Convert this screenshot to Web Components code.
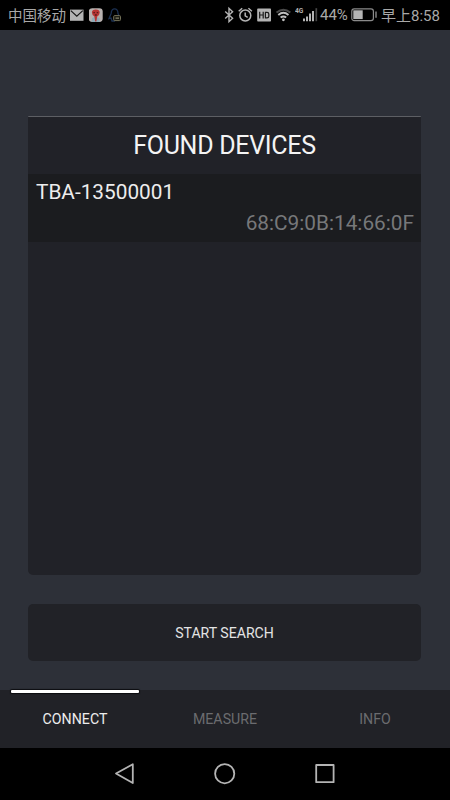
<!DOCTYPE html>
<html lang="en">
<head>
<meta charset="utf-8">
<meta name="viewport" content="width=device-width, initial-scale=1">
<title>Devices</title>
<style>
  body {
    margin: 0;
    background: #000;
    font-family: Roboto, "Noto Sans CJK SC", sans-serif;
  }
</style>
</head>
<body>
<device-app></device-app>

<script>
const define = (name, html) => {
  const template = document.createElement('template');
  template.innerHTML = html;

  customElements.define(name, class extends HTMLElement {
    constructor() {
      super();
      this.attachShadow({ mode: 'open' });
      this.shadowRoot.appendChild(template.content.cloneNode(true));
    }
  });
};

define('status-bar', `
  <style>
    :host {
      display: flex;
      justify-content: space-between;
      box-sizing: border-box;
      height: 30px;
      padding: 0 10px 0 8px;
      background: #000;
      color: #a9a9a9;
      font-size: 14.5px;
      line-height: 30px;
      white-space: nowrap;
    }

    .group {
      display: flex;
      align-items: center;
    }

    svg {
      display: block;
      flex: none;
    }

    .carrier { width: 62px; padding-top: 3px; }
    .percent { width: 31px; font-size: 15px; line-height: 28px; }
    .time { width: 59px; padding-top: 2px; font-size: 15px; }
  </style>
  <div class="group">
    <span class="carrier">中国移动</span>
    <!-- mail -->
    <svg width="19" height="30" viewBox="0 0 19 30">
      <rect x="0" y="9.6" width="13.5" height="11.2" fill="#b4b4b4"/>
      <path d="M.8 10.6 6.8 16.2 12.8 10.6" fill="none" stroke="#161616" stroke-width="1.2"/>
    </svg>
    <!-- music app -->
    <svg width="19" height="30" viewBox="0 0 19 30">
      <rect x="-.3" y="8.2" width="14" height="13.8" rx="3.4" fill="#b9b2b0"/>
      <path d="M3 18.2 6.6 16.6 10.4 18.2 10.8 22H2.6Z" fill="#8eabb8"/>
      <path d="M2.9 12.6Q2.9 9.4 6.8 9.4T10.7 12.6Q10.7 15.2 8.2 16.4L7.4 21.4H6.2L5.4 16.4Q2.9 15.2 2.9 12.6Z" fill="#b83533"/>
      <path d="M4.4 12.7h1.5M7.7 12.7h1.5M5.8 15h2" stroke="#5a1a1b" stroke-width="1.3"/>
    </svg>
    <!-- messenger -->
    <svg width="15" height="30" viewBox="0 0 15 30">
      <path d="M3.2 13.6C3.2 7.2 10 7.2 10 13.6L10.8 15M3.2 13.6 1 18.5 3 18 4 21H7" fill="none" stroke="#1b3052" stroke-width="1.3"/>
      <rect x="5.7" y="15.6" width="6.8" height="5" rx="1" fill="#17170f" stroke="#74725a" stroke-width="1"/>
      <path d="M7.5 18.1h3.5" stroke="#a3a184" stroke-width="1"/>
    </svg>
  </div>
  <div class="group">
    <!-- bluetooth -->
    <svg width="14" height="30" viewBox="0 0 14 30">
      <path d="M1.2 11.6 8.6 18.3 5 21.7V8.3L8.6 11.7 1.2 18.4" fill="none" stroke="#b4b4b4" stroke-width="1.4"/>
    </svg>
    <!-- alarm -->
    <svg width="19" height="30" viewBox="0 0 19 30">
      <g fill="none" stroke="#b4b4b4" stroke-width="1.5">
        <circle cx="7.3" cy="15.5" r="5.5"/>
        <path d="M7.2 12.4v3.5l2.5 1.5M.7 11.2 4.2 8.2M10.4 8.2l3.5 3"/>
      </g>
    </svg>
    <!-- HD voice -->
    <svg width="19" height="30" viewBox="0 0 19 30">
      <rect x=".2" y="8.6" width="13.8" height="13" rx=".8" fill="#b4b4b4"/>
      <path d="M2.7 11.8v6.6M6.2 11.8v6.6M2.7 15h3.5M8.4 12.4v5.4M7.9 12.4H10q1.8 0 1.8 1.6v2.2q0 1.6-1.8 1.6H7.9" fill="none" stroke="#1a1a1a" stroke-width="1.2"/>
    </svg>
    <!-- wifi -->
    <svg width="19" height="30" viewBox="0 0 19 30">
      <path d="M.5 12.6Q7.4 6.8 14.3 12.6" fill="none" stroke="#4a4a4a" stroke-width="2"/>
      <path d="M2.3 15Q7.4 10.6 12.5 15M4.6 17.6Q7.4 15.4 10.2 17.6" fill="none" stroke="#c0c0c0" stroke-width="1.9"/>
      <circle cx="7.4" cy="19.8" r="1.4" fill="#c0c0c0"/>
    </svg>
    <!-- 4G signal -->
    <svg width="25" height="30" viewBox="0 0 25 30">
      <text x="0" y="13.4" font-size="8" font-weight="700" fill="#b4b4b4" textLength="8.4" lengthAdjust="spacingAndGlyphs">4G</text>
      <path d="M9 18.6v2.6M12 16.4v4.8M15 13.4v7.8M18 11v10.2" stroke="#b4b4b4" stroke-width="2"/>
      <path d="M21.3 8.2v13" stroke="#484848" stroke-width="1.7"/>
    </svg>
    <span class="percent">44%</span>
    <!-- battery -->
    <svg width="30" height="30" viewBox="0 0 30 30">
      <rect x=".8" y="8.8" width="21.6" height="11.8" rx="2.4" fill="none" stroke="#8a8a8a" stroke-width="1.2"/>
      <rect x="2.3" y="10.3" width="9.4" height="8.8" fill="#b4b4b4"/>
      <path d="M25 11.5v6.2" stroke="#8a8a8a" stroke-width="1.4"/>
    </svg>
    <span class="time">早上8:58</span>
  </div>
`);

define('device-list', `
  <style>
    :host {
      display: flex;
      flex-direction: column;
      box-sizing: border-box;
      height: 459px;
      border-top: 1px solid #5d5f64;
      border-radius: 1px 1px 5px 5px;
      background: #212228;
      overflow: hidden;
    }

    h1 {
      margin: 0;
      height: 57px;
      color: #f4f4f4;
      font-size: 25px;
      font-weight: 400;
      letter-spacing: -0.3px;
      line-height: 57px;
      text-align: center;
    }
  </style>
  <h1><slot name="title"></slot></h1>
  <slot></slot>
`);

define('device-row', `
  <style>
    :host {
      display: flex;
      flex-direction: column;
      box-sizing: border-box;
      height: 68px;
      padding: 3px 7px 0 8px;
      background: #1b1c1f;
      font-size: 20.8px;
      line-height: 31px;
    }

    .name { color: #ededed; }
    .address { align-self: flex-end; color: #77787a; }
  </style>
  <span class="name"><slot></slot></span>
  <span class="address"><slot name="address"></slot></span>
`);

define('action-button', `
  <style>
    :host { display: block; }

    button {
      display: block;
      width: 100%;
      height: 57px;
      padding: 1px 0 0;
      border: 0;
      border-radius: 5px;
      background: #212227;
      color: #e4e4e4;
      font: 400 14.1px/56px Roboto, sans-serif;
    }
  </style>
  <button type="button"><slot></slot></button>
`);

define('tab-bar', `
  <style>
    :host {
      display: flex;
      height: 58px;
      background: #212227;
    }
  </style>
  <slot></slot>
`);

define('tab-item', `
  <style>
    :host {
      flex: 1;
      position: relative;
      color: #6b6c6f;
      font-size: 14.2px;
      line-height: 58px;
      text-align: center;
    }

    :host([active]) { color: #ededed; }

    /* marker sits on the upper edge of the bar */
    :host([active])::before {
      content: "";
      position: absolute;
      top: 0;
      left: 11px;
      right: 11px;
      height: 3px;
      border-radius: 1px;
      background: #fff;
      box-shadow: 0 0 1px 1px #0c0d10;
    }
  </style>
  <slot></slot>
`);

define('nav-bar', `
  <style>
    :host {
      display: flex;
      justify-content: center;
      align-items: center;
      gap: 72px;
      height: 52px;
      background: #000;
    }

    svg {
      display: block;
      fill: none;
      stroke: #b4b4b4;
      stroke-width: 1.8;
      stroke-linejoin: round;
    }
  </style>
  <svg width="28" height="28" viewBox="0 0 28 28"><path d="M5 13.5 21.8 4.3V23Z"/></svg>
  <svg width="28" height="28" viewBox="0 0 28 28"><circle cx="13.7" cy="13.7" r="9.6"/></svg>
  <svg width="28" height="28" viewBox="0 0 28 28"><rect x="5.2" y="5" width="17.4" height="17.2"/></svg>
`);

define('device-app', `
  <style>
    :host {
      display: flex;
      flex-direction: column;
      height: 800px;
      overflow: hidden;
    }

    main {
      flex: 1;
      display: flex;
      flex-direction: column;
      gap: 29px;
      padding: 86px 29px 0 28px;
      background: #2d3038;
    }
  </style>
  <status-bar></status-bar>
  <main>
    <device-list>
      <span slot="title">FOUND DEVICES</span>
      <device-row>TBA-13500001<span slot="address">68:C9:0B:14:66:0F</span></device-row>
    </device-list>
    <action-button>START SEARCH</action-button>
  </main>
  <tab-bar>
    <tab-item active>CONNECT</tab-item>
    <tab-item>MEASURE</tab-item>
    <tab-item>INFO</tab-item>
  </tab-bar>
  <nav-bar></nav-bar>
`);
</script>
</body>
</html>
